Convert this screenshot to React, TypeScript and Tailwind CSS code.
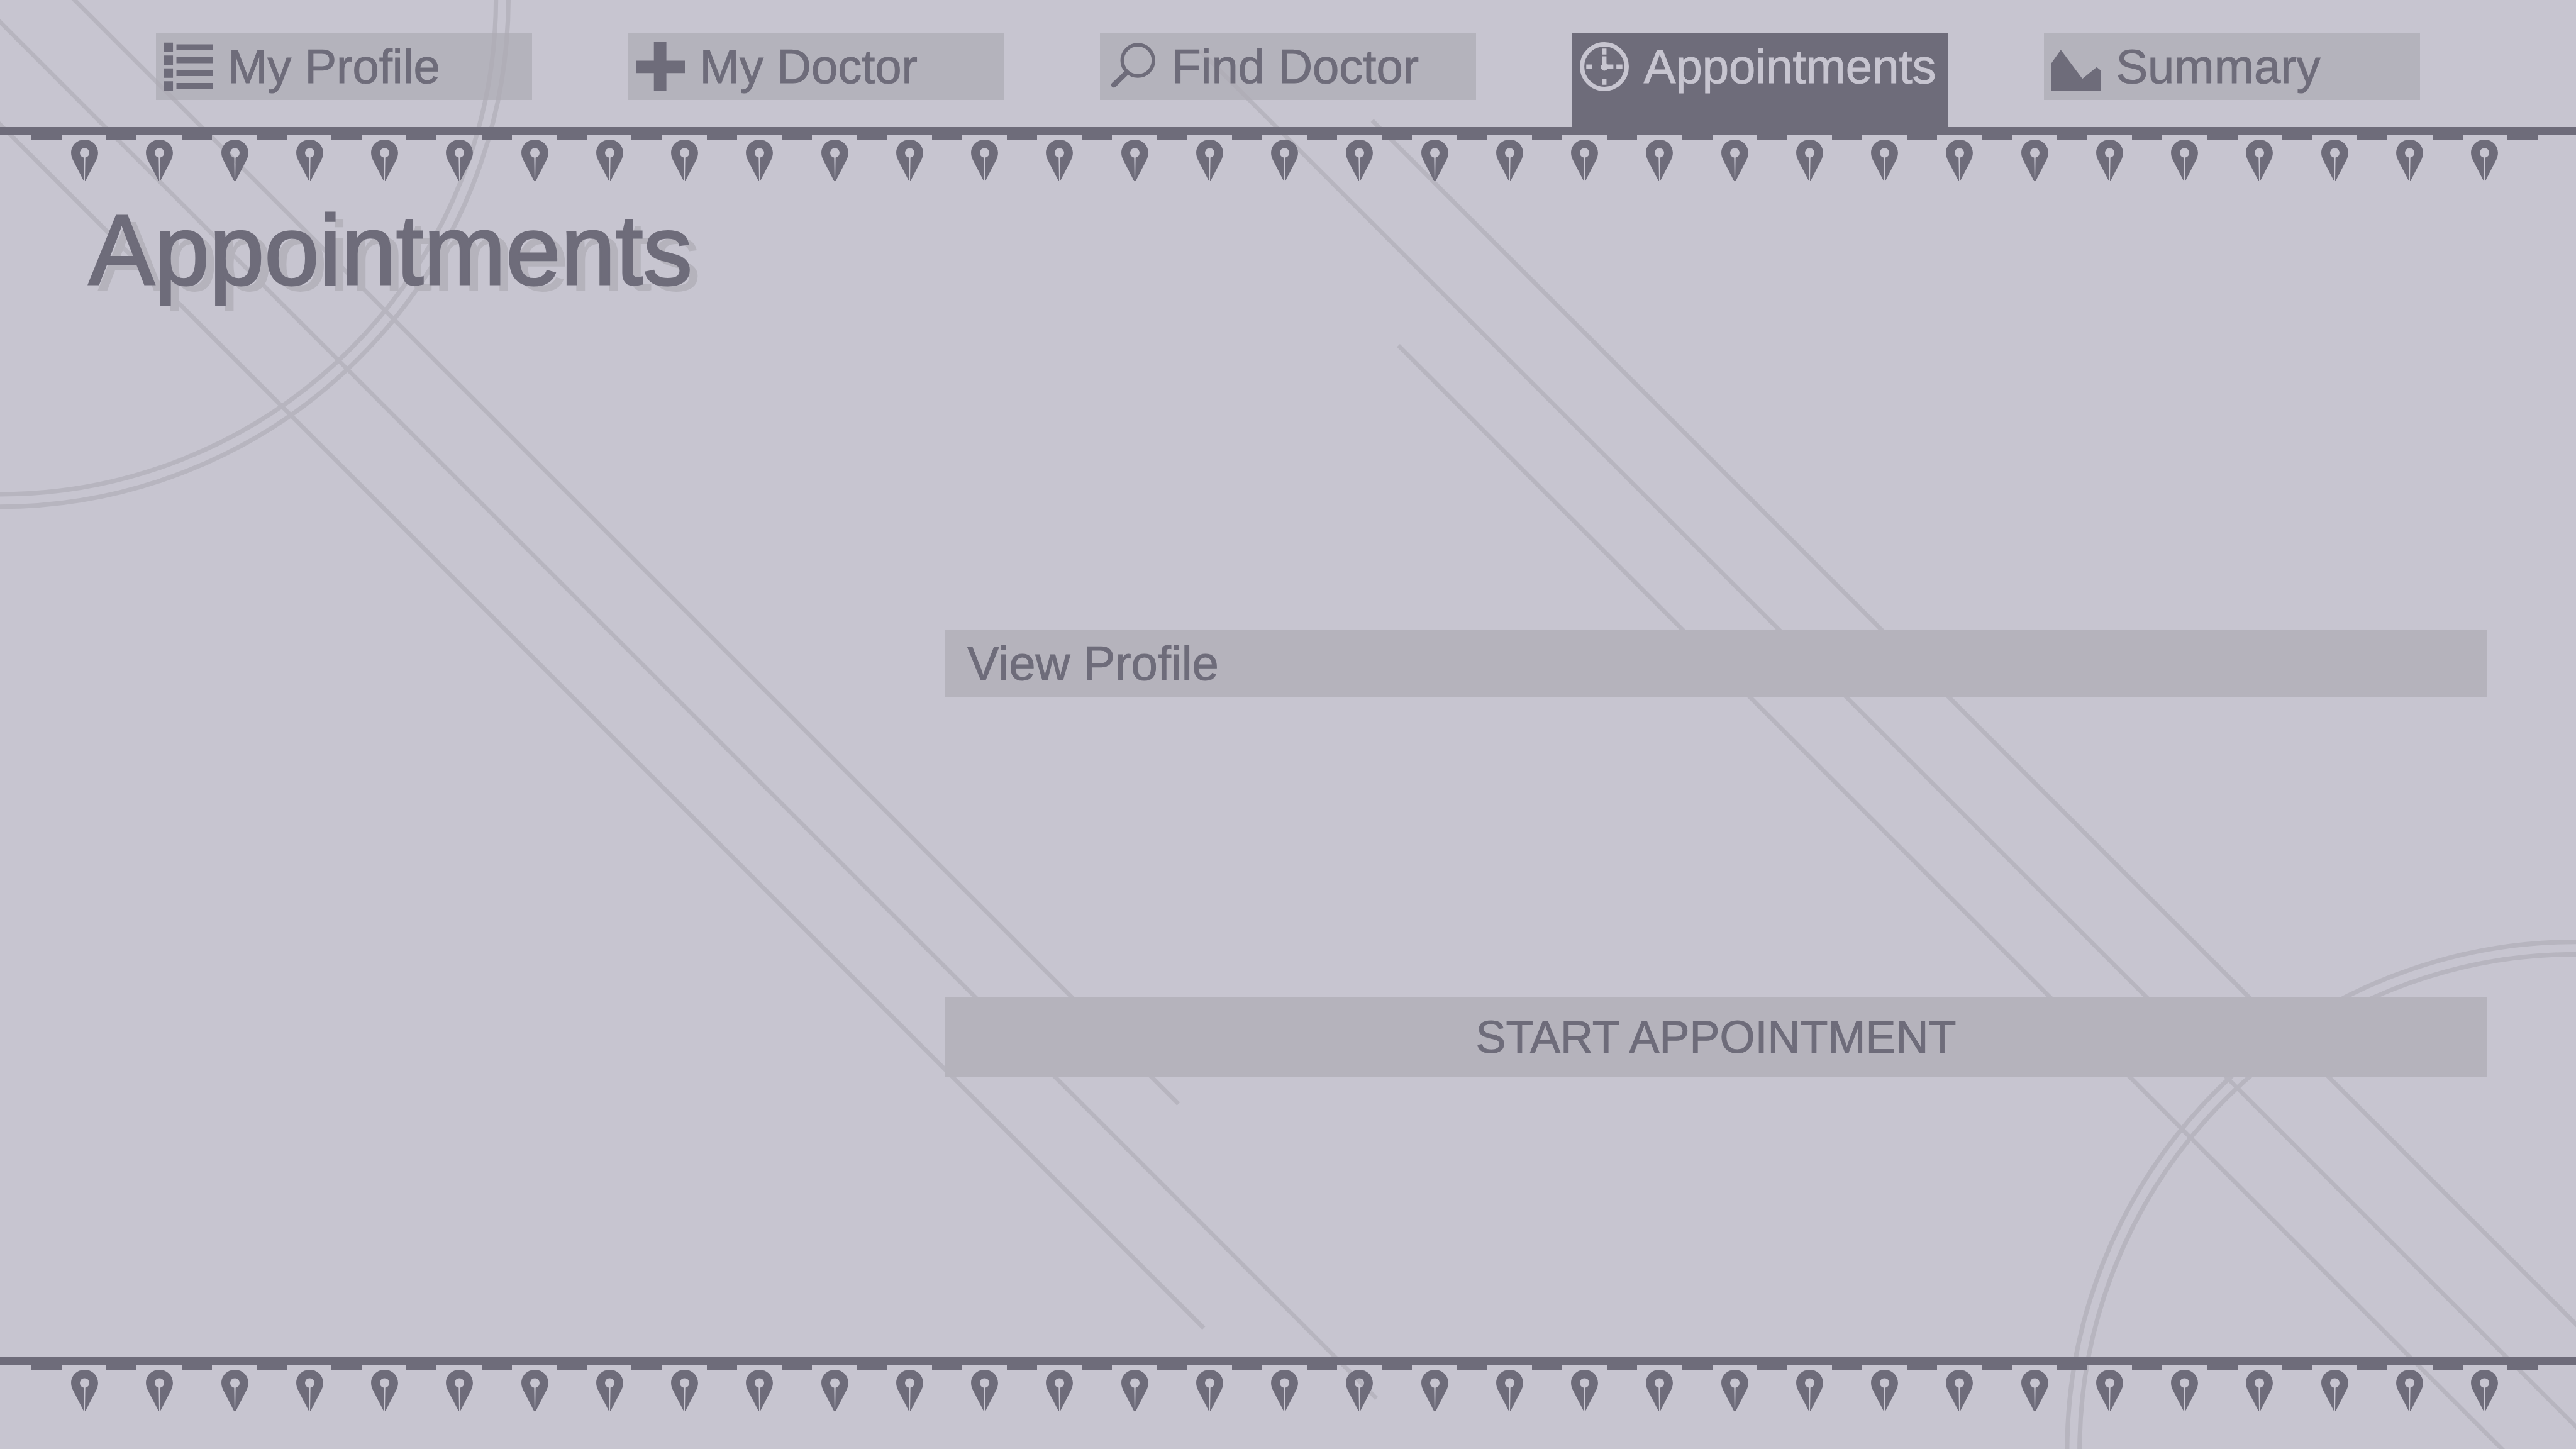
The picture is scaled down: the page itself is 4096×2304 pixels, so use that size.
import type { ReactNode } from 'react';

const LINES = [
  [-200, -374, 2749, 2575],
  [-200, -149, 3211, 3262],
  [-200, 90, 2808, 3098],
  [2800, 119, 6200, 3519],
  [3201, 281, 6200, 3280],
  [3262, 806, 6200, 3744],
];

function Backdrop() {
  return (
    <svg
      className="pointer-events-none absolute inset-0 -z-10 h-full w-full"
      viewBox="0 0 6009 3380"
      preserveAspectRatio="xMidYMid slice"
      fill="none"
      stroke="#b7b5bf"
      aria-hidden="true"
    >
      {LINES.map(([x1, y1, x2, y2]) => (
        <line key={`${x1} ${y1}`} x1={x1} y1={y1} x2={x2} y2={y2} strokeWidth="10" />
      ))}
      <g strokeWidth="10.5">
        <circle cx="-1" cy="-5" r="1158" />
        <circle cx="-1" cy="-5" r="1187" />
        <circle cx="6009" cy="3384" r="1158" />
        <circle cx="6009" cy="3384" r="1187" />
      </g>
    </svg>
  );
}

function Icon({ children }: { children: ReactNode }) {
  return (
    <svg className="size-[78px] shrink-0" viewBox="0 0 114 114" fill="currentColor" aria-hidden="true">
      {children}
    </svg>
  );
}

function ListIcon() {
  return (
    <Icon>
      {[1, 31, 61, 91].map((y) => (
        <path key={y} d={`M0 ${y}h22v22h-22zM30 ${y + 4}h84v14h-84z`} />
      ))}
    </Icon>
  );
}

function PlusIcon() {
  return (
    <Icon>
      <path d="M42 0h29v43h43v29H71v42H42V72H0V43h42z" />
    </Icon>
  );
}

function SearchIcon() {
  return (
    <Icon>
      <circle cx="70.5" cy="42.5" r="36.3" fill="none" stroke="currentColor" strokeWidth="8.4" />
      <path d="M39.5 67.5L10.5 95a6 6 0 0 0 8.5 9L48 75.5z" />
    </Icon>
  );
}

function ClockIcon() {
  return (
    <Icon>
      <circle cx="57" cy="57" r="51.8" fill="none" stroke="currentColor" strokeWidth="10.4" />
      <path d="M52 15h10v14H52zM52 85h10v14H52zM15 52h14v10H15zM85 52h14v10H85z" />
      <path d="M52 33h10v15q0 4 4 4h12v10H64a8 8 0 1 1-12-10z" />
    </Icon>
  );
}

function ChartIcon() {
  return (
    <Icon>
      <path d="M0 48.5L21.7 18L71.8 85L105 58L114 65.3V114H0z" />
    </Icon>
  );
}

const TABS = [
  { label: 'My Profile', icon: <ListIcon /> },
  { label: 'My Doctor', icon: <PlusIcon /> },
  { label: 'Find Doctor', icon: <SearchIcon /> },
  { label: 'Appointments', icon: <ClockIcon />, active: true },
  { label: 'Summary', icon: <ChartIcon /> },
];

function Tab({ label, icon, active }: { label: string; icon: ReactNode; active?: boolean }) {
  return (
    <button
      type="button"
      aria-current={active ? 'page' : undefined}
      className={
        active
          ? 'flex items-start bg-[#6e6c7a] pb-[43px] text-left text-[#c7c5d0]'
          : 'flex items-start bg-[#adabb4]/70 text-left'
      }
    >
      <span className="flex h-[106px] items-center gap-6 pl-3">
        {icon}
        <span className="whitespace-nowrap">{label}</span>
      </span>
    </button>
  );
}

function Pin() {
  return (
    <svg className="h-[66px] w-[43px] shrink-0" viewBox="0 0 63 97" fill="currentColor">
      <path
        fillRule="evenodd"
        d="M31.5 0C49 0 63 13.5 63 31C63 36.500 61.500 41 59.500 46L33.300 97H32.200L33.200 42A11 11.200 0 1 0 29.800 42L30.800 97H29.700L3.500 46C1.500 41 0 36.500 0 31C0 13.500 14 0 31.500 0Z"
      />
    </svg>
  );
}

function Trim() {
  return (
    <div aria-hidden="true">
      <div className="h-3 bg-[#6e6c7a]" />
      <div className="flex justify-between pr-[61px] pl-[50px]">
        {Array.from({ length: 34 }, (_, i) => (
          <span key={i} className="h-2 w-12 bg-[#6e6c7a]" />
        ))}
      </div>
      <div className="flex justify-between pr-[124px] pl-[113px]">
        {Array.from({ length: 33 }, (_, i) => (
          <Pin key={i} />
        ))}
      </div>
    </div>
  );
}

export default function App() {
  return (
    <div className="relative isolate flex min-h-screen flex-col overflow-hidden bg-[#c7c5d0] pb-[60px] font-['Liberation_Sans',Arial,sans-serif] text-[76px] leading-[88px] text-[#6e6c7a] [-webkit-text-stroke:1px_currentColor]">
      <Backdrop />
      <header>
        <nav className="grid grid-cols-5 items-start gap-[153px] px-[248px] pt-[53px]">
          {TABS.map((tab) => (
            <Tab key={tab.label} {...tab} />
          ))}
        </nav>
        <Trim />
      </header>
      <main className="flex flex-1 flex-col px-[141px] pt-[18px]">
        <h1 className="text-[157px] leading-[184px] [-webkit-text-stroke:3px_currentColor] [text-shadow:14px_10px_0_#b5b3bc]">
          Appointments
        </h1>
        <div className="mt-[512px] flex w-[2453px] max-w-full flex-col gap-[477px] self-end">
          <button type="button" className="h-[106px] bg-[#b5b3bc] px-9 text-left">
            View Profile
          </button>
          <button type="button" className="h-32 bg-[#b5b3bc] px-9 text-center text-[72px]">
            START APPOINTMENT
          </button>
        </div>
      </main>
      <Trim />
    </div>
  );
}
